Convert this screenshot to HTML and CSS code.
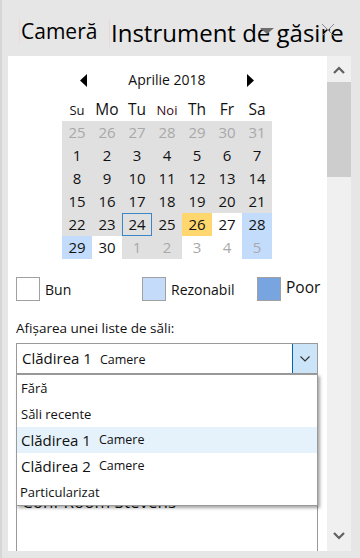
FILE: index.html
```html
<!DOCTYPE html>
<html lang="ro">
<head>
<meta charset="UTF-8">
<meta name="viewport" content="width=device-width, initial-scale=1.0">
<title>Instrument de găsire</title>
<link rel="stylesheet" href="styles.css">
</head>
<body>

<!-- Titlu panou -->
<header class="title-bar">
  <span class="tab tab-small">Cameră</span>
  <span class="tab tab-large">Instrument de găsire</span>
  <span class="pin-caret"></span>
  <svg class="close-x" width="14" height="14" viewBox="0 0 14 14">
    <path d="M1 1 L13 13 M13 1 L1 13" stroke="#8a8a8a" stroke-width="1" fill="none"/>
  </svg>
</header>

<main class="pane">
  <div class="pane-content">

    <!-- Calendar -->
    <div class="calendar">
      <div class="cal-head">
        <svg width="7" height="13" viewBox="0 0 7 13"><polygon points="7,0 7,13 0,6.5" fill="#000"/></svg>
        <span class="cal-title">Aprilie 2018</span>
        <svg width="7" height="13" viewBox="0 0 7 13"><polygon points="0,0 0,13 7,6.5" fill="#000"/></svg>
      </div>
      <div class="cal-week">
        <span class="wd wd-small">Su</span>
        <span class="wd">Mo</span>
        <span class="wd">Tu</span>
        <span class="wd wd-small wd-dark">Noi</span>
        <span class="wd">Th</span>
        <span class="wd">Fr</span>
        <span class="wd">Sa</span>
      </div>
      <div class="cal-grid">
        <span class="day past other">25</span>
        <span class="day past other">26</span>
        <span class="day past other">27</span>
        <span class="day past other">28</span>
        <span class="day past other">29</span>
        <span class="day past other">30</span>
        <span class="day past other">31</span>

        <span class="day past">1</span>
        <span class="day past">2</span>
        <span class="day past">3</span>
        <span class="day past">4</span>
        <span class="day past">5</span>
        <span class="day past">6</span>
        <span class="day past">7</span>

        <span class="day past">8</span>
        <span class="day past">9</span>
        <span class="day past">10</span>
        <span class="day past">11</span>
        <span class="day past">12</span>
        <span class="day past">13</span>
        <span class="day past">14</span>

        <span class="day past">15</span>
        <span class="day past">16</span>
        <span class="day past">17</span>
        <span class="day past">18</span>
        <span class="day past">19</span>
        <span class="day past">20</span>
        <span class="day past">21</span>

        <span class="day past">22</span>
        <span class="day past">23</span>
        <span class="day past today">24</span>
        <span class="day past">25</span>
        <span class="day busy">26</span>
        <span class="day">27</span>
        <span class="day fair">28</span>

        <span class="day fair">29</span>
        <span class="day">30</span>
        <span class="day past other">1</span>
        <span class="day past other">2</span>
        <span class="day other">3</span>
        <span class="day other">4</span>
        <span class="day fair other">5</span>
      </div>
    </div>

    <!-- Legenda -->
    <div class="legend">
      <div class="legend-item"><span class="swatch"></span>Bun</div>
      <div class="legend-item"><span class="swatch swatch-fair"></span>Rezonabil</div>
      <div class="legend-item"><span class="swatch swatch-poor"></span><span class="poor-label">Poor</span></div>
    </div>

    <label class="list-label">Afișarea unei liste de săli:</label>

    <!-- Combobox cu lista deschisa -->
    <div class="combo-wrap">
      <div class="combo">
        <div class="combo-text"><span class="main">Clădirea 1</span><span class="sub">Camere</span></div>
        <div class="combo-btn">
          <svg width="10" height="6" viewBox="0 0 10 6"><polyline points="0.5,0.5 5,5 9.5,0.5" stroke="#333" stroke-width="1.2" fill="none"/></svg>
        </div>
      </div>
      <ul class="drop-list">
        <li class="drop-item">Fără</li>
        <li class="drop-item">Săli recente</li>
        <li class="drop-item building selected"><span class="main">Clădirea 1</span><span class="sub">Camere</span></li>
        <li class="drop-item building"><span class="main">Clădirea 2</span><span class="sub">Camere</span></li>
        <li class="drop-item custom">Particularizat</li>
      </ul>
    </div>

    <div class="room-list">Conf Room Stevens</div>
  </div>

  <!-- Bara de derulare -->
  <div class="scrollbar">
    <div class="scroll-btn scroll-up">
      <svg width="12" height="8" viewBox="0 0 12 8"><polyline points="1,7 6,2 11,7" stroke="#606060" stroke-width="2.2" fill="none"/></svg>
    </div>
    <div class="scroll-thumb"></div>
    <div class="scroll-space"></div>
    <div class="scroll-btn scroll-down">
      <svg width="12" height="8" viewBox="0 0 12 8"><polyline points="1,1 6,6 11,1" stroke="#606060" stroke-width="2.2" fill="none"/></svg>
    </div>
  </div>
</main>

</body>
</html>
```

FILE: styles.css
```css
/* Baza */
body {
  margin: 0;
  width: 360px;
  height: 558px;
  overflow: hidden;
  background-color: #e6e6e6;
  box-shadow: inset 2px 0 #d6d6d6;
  font-family: "Open Sans", sans-serif;
  color: #111;
}

/* Titlu */
.title-bar {
  position: relative;
  height: 56px;
  box-sizing: border-box;
  padding: 19px 0 0 19px;
  display: flex;
  align-items: flex-start;
}
.tab {
  border-left: 1px solid #ecd6d6;
  padding-left: 1px;
  color: #000;
  white-space: nowrap;
}
.tab-small {
  box-sizing: border-box;
  width: 90px;
  font-size: 21px;
  line-height: 24px;
}
.tab-large {
  font-size: 24px;
  line-height: 28px;
}
.pin-caret {
  position: absolute;
  left: 260px;
  top: 28px;
  border-left: 7px solid transparent;
  border-right: 7px solid transparent;
  border-top: 6px solid #6e6e6e;
}
.close-x {
  position: absolute;
  left: 321px;
  top: 23px;
}

/* Panou */
.pane {
  display: flex;
  margin-left: 8px;
  width: 343px;
  height: 495px;
  background-color: #fff;
  overflow: hidden;
}
.pane-content {
  flex: 1;
  padding-left: 8px;
}

/* Calendar */
.calendar {
  width: 210px;
  margin-left: 46px;
  padding-top: 14px;
}
.cal-head {
  display: flex;
  justify-content: center;
  align-items: center;
  gap: 41px;
  height: 20px;
}
.cal-title {
  font-size: 14px;
  line-height: 20px;
}
.cal-week {
  display: grid;
  grid-template-columns: repeat(7, 30px);
  align-items: baseline;
  height: 23px;
  margin-top: 8px;
}
.wd {
  text-align: center;
  font-size: 15.5px;
  line-height: 23px;
}
.wd-small {
  font-size: 13px;
}
.wd-dark {
  color: #3a0a14;
}
.cal-grid {
  display: grid;
  grid-template-columns: repeat(7, 30px);
  grid-auto-rows: 23px;
}
.day {
  text-align: center;
  font-size: 15px;
  line-height: 23px;
  color: #111;
}
.past { background-color: #e0e0e0; }
.busy { background-color: #ffd76e; }
.fair { background-color: #c4dcfb; }
.other { color: #a9a9a9; }
.today { box-shadow: inset 0 0 0 1px #3a86c6; }

/* Legenda */
.legend {
  display: grid;
  grid-template-columns: 126px 115px 1fr;
  margin-top: 17px;
}
.legend-item {
  display: flex;
  align-items: center;
  gap: 5px;
  font-size: 14px;
}
.swatch {
  width: 24px;
  height: 24px;
  box-sizing: border-box;
  border: 1px solid #a0a0a0;
  background-color: #fff;
}
.swatch-fair { background-color: #c4dcfa; }
.swatch-poor { background-color: #78a5df; }
.poor-label {
  font-size: 15.5px;
  padding-bottom: 4px;
}

.list-label {
  display: block;
  margin-top: 17px;
  font-size: 13.5px;
  line-height: 18px;
}

/* Combobox */
.combo-wrap {
  position: relative;
  width: 302px;
  margin-top: 6px;
}
.combo {
  display: flex;
  height: 31px;
  box-sizing: border-box;
  border: 1px solid #9a9a9a;
}
.combo-text {
  flex: 1;
  padding-left: 5px;
  line-height: 29px;
  white-space: nowrap;
}
.main {
  font-size: 15px;
}
.sub {
  font-size: 12.5px;
  margin-left: 8px;
}
.combo-btn {
  width: 25px;
  box-sizing: border-box;
  background-color: #cce4f7;
  border-left: 1px solid #0063b1;
  display: flex;
  align-items: center;
  justify-content: center;
}
.drop-list {
  position: absolute;
  top: 100%;
  left: 0;
  right: 0;
  margin: 0;
  padding: 0;
  list-style: none;
  background-color: #fff;
  border: 1px solid #9a9a9a;
  box-shadow: 2px 2px 3px rgba(0, 0, 0, 0.35);
  z-index: 2;
}
.drop-item {
  height: 26px;
  line-height: 26px;
  padding-left: 4px;
  font-size: 13px;
  white-space: nowrap;
}
.drop-item .sub {
  vertical-align: 2px;
}
.selected {
  background-color: #e5f1fb;
}
.custom {
  padding-left: 3px;
}

/* Lista sali (sub lista deschisa) */
.room-list {
  width: 302px;
  height: 120px;
  box-sizing: border-box;
  margin-top: 113px;
  border: 1px solid #9a9a9a;
  padding: 2px 5px;
  font-size: 17px;
  line-height: 23px;
}

/* Bara de derulare */
.scrollbar {
  width: 24px;
  background-color: #f0f0f0;
  display: flex;
  flex-direction: column;
}
.scroll-btn {
  display: flex;
  justify-content: center;
}
.scroll-up {
  height: 26px;
  padding-top: 10px;
  box-sizing: border-box;
}
.scroll-thumb {
  height: 95px;
  background-color: #cdcdcd;
}
.scroll-space {
  flex: 1;
}
.scroll-down {
  height: 26px;
  padding-top: 7px;
  box-sizing: border-box;
}
```
